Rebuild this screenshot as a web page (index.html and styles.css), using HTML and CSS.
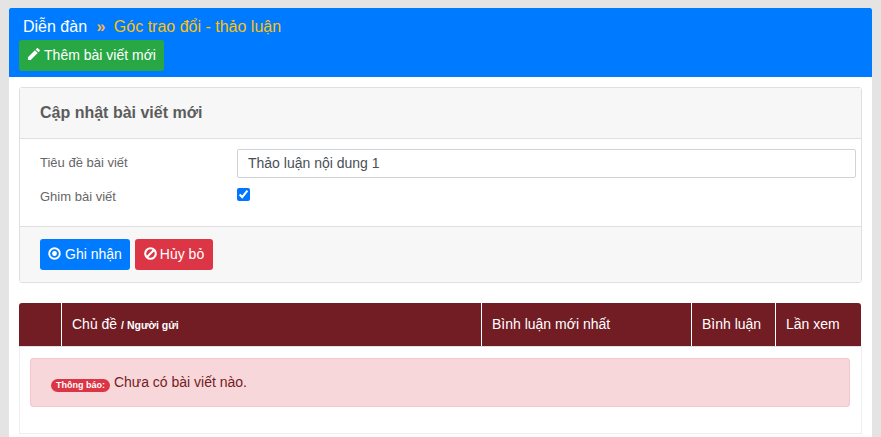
FILE: index.html
```html
<!DOCTYPE html>
<html lang="vi">
<head>
    <meta charset="UTF-8">
    <meta name="viewport" content="width=device-width, initial-scale=1.0">
    <title>Diễn đàn</title>
    <link rel="stylesheet" href="styles.css">
</head>
<body>
    <div class="page">
        <div class="topbar">
            <div class="crumbs">
                <span class="crumb-home">Diễn đàn</span>
                <span class="crumb-sep">»</span>
                <span class="crumb-current">Góc trao đổi - thảo luận</span>
            </div>
            <button class="btn btn-green" type="button">
                <svg class="icon" viewBox="0 0 14 14"><path d="M1 13v-3l7.500-7.500 3 3L4 13zM9.300 1.700l1.200-1.200c.5-.5 1-.5 1.500 0L13.500 2c.5.5.5 1 0 1.500l-1.200 1.200z"/></svg>
                Thêm bài viết mới
            </button>
        </div>

        <div class="content">
            <div class="card">
                <div class="card-header">Cập nhật bài viết mới</div>
                <div class="card-body">
                    <div class="form-row">
                        <label class="form-label" for="title">Tiêu đề bài viết</label>
                        <input class="form-input" id="title" type="text" value="Thảo luận nội dung 1">
                    </div>
                    <div class="form-row form-row-check">
                        <label class="form-label" for="pin">Ghim bài viết</label>
                        <input class="form-check" id="pin" type="checkbox" checked>
                    </div>
                </div>
                <div class="card-footer">
                    <button class="btn btn-blue" type="button">
                        <svg class="icon" viewBox="0 0 14 14"><circle cx="7" cy="7" r="5.7" fill="none" stroke="currentColor" stroke-width="2"/><circle cx="7" cy="7" r="2.6"/></svg>
                        Ghi nhận
                    </button>
                    <button class="btn btn-red" type="button">
                        <svg class="icon" viewBox="0 0 14 14"><circle cx="7" cy="7" r="5.7" fill="none" stroke="currentColor" stroke-width="2.2"/><path d="M3 11 11 3" fill="none" stroke="currentColor" stroke-width="2.2"/></svg>
                        Hủy bỏ
                    </button>
                </div>
            </div>

            <div class="topics">
                <div class="topics-head">
                    <div class="col col-icon"></div>
                    <div class="col col-topic">Chủ đề <small>/ Người gửi</small></div>
                    <div class="col col-latest">Bình luận mới nhất</div>
                    <div class="col col-comments">Bình luận</div>
                    <div class="col col-views">Lần xem</div>
                </div>
                <div class="topics-body">
                    <div class="alert">
                        <span class="badge">Thông báo:</span> Chưa có bài viết nào.
                    </div>
                </div>
            </div>
        </div>
    </div>
</body>
</html>
```

FILE: styles.css
```css
* {
    margin: 0;
    padding: 0;
    box-sizing: border-box;
}

body {
    font-family: 'Liberation Sans', Arial, sans-serif;
    font-size: 14px;
    color: #212529;
    background: #e4e4e4;
    height: 437px;
    overflow: hidden;
    padding: 8px 9px 0;
}

.page {
    background: #fff;
    height: 429px;
}

.topbar {
    background: #007bff;
    height: 69px;
    padding: 9px 10px 0;
    border-radius: 2px 2px 0 0;
}

.crumbs {
    font-size: 16px;
    line-height: 20px;
    height: 23px;
    padding-left: 4px;
    color: #fff;
}

.crumb-sep {
    color: #ffb648;
    font-weight: bold;
    margin: 0 4px 0 5px;
}

.crumb-current {
    color: #ffc107;
}

.btn {
    display: inline-flex;
    align-items: center;
    justify-content: center;
    gap: 4px;
    height: 31px;
    padding-bottom: 2px;
    border: none;
    border-radius: 3px;
    color: #fff;
    font-family: inherit;
    font-size: 14px;
    cursor: pointer;
}

.icon {
    width: 13px;
    height: 13px;
    fill: currentColor;
}

.btn-green {
    background: #28a745;
    width: 145px;
}

.btn-blue {
    background: #007bff;
    width: 90px;
}

.btn-red {
    background: #dc3545;
    width: 78px;
    gap: 3px;
}

.content {
    padding: 10px 10px 0;
}

.card {
    border: 1px solid #dfdfdf;
    border-radius: 3px;
}

.card-header {
    height: 51px;
    padding: 0 20px;
    background: #f7f7f7;
    border-bottom: 1px solid #dfdfdf;
    font-size: 16px;
    font-weight: bold;
    line-height: 49px;
    color: #5c5c5c;
}

.card-body {
    height: 87px;
    padding: 10px 5px 0 20px;
}

.form-row {
    display: flex;
    align-items: center;
    height: 29px;
}

.form-row-check {
    height: 20px;
    margin-top: 9px;
}

.form-label {
    width: 197px;
    flex: none;
    font-size: 13px;
    color: #666;
    margin-top: -2px;
}

.form-input {
    flex: 1;
    height: 29px;
    padding: 0 10px 2px;
    border: 1px solid #ced4da;
    border-radius: 2px;
    font-family: inherit;
    font-size: 14px;
    color: #495057;
}

.form-check {
    width: 13px;
    height: 13px;
    margin-top: -5px;
    accent-color: #0075ff;
}

.card-footer {
    display: flex;
    gap: 5px;
    height: 56px;
    padding: 12px 20px 0;
    background: #f7f7f7;
    border-top: 1px solid #dfdfdf;
}

.topics {
    margin-top: 20px;
    height: 130px;
}

.topics-head {
    display: flex;
    height: 44px;
    margin-right: 1px;
    background: #721c24;
    border-bottom: 1px solid #dee2e6;
    border-radius: 3px 3px 0 0;
    color: #fff;
    font-size: 14px;
    line-height: 42px;
}

.col {
    padding-left: 10px;
    border-right: 1px solid #fff;
    flex: none;
}

.col-icon {
    width: 43px;
}

.col-topic {
    width: 420px;
}

.col-latest {
    width: 210px;
}

.col-comments {
    width: 84px;
}

.col-views {
    flex: 1;
    border-right: none;
}

.col small {
    font-size: 10.5px;
    font-weight: bold;
}

.topics-body {
    height: 87px;
    padding: 11px 11px 0 10px;
    border: 1px solid #eee;
    border-top: none;
}

.alert {
    height: 49px;
    padding: 0 20px;
    background: #f8d7da;
    border: 1px solid #f5c6cb;
    border-radius: 3px;
    color: #721c24;
    font-size: 14px;
    line-height: 46px;
}

.badge {
    display: inline-block;
    padding: 0 5px;
    background: #dc3545;
    border-radius: 7px;
    color: #fff;
    font-size: 9px;
    font-weight: bold;
    line-height: 13px;
    vertical-align: -1px;
}
```
